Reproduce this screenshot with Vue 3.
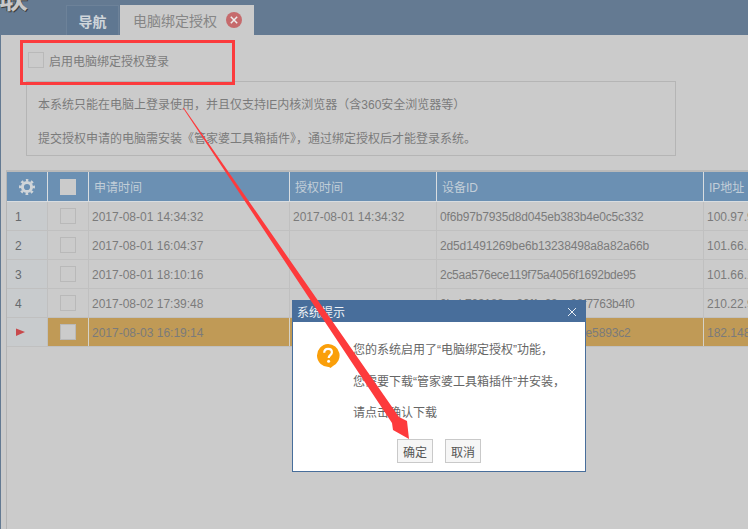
<script setup>
const rows = [
  { no: '1', applied: '2017-08-01 14:34:32', granted: '2017-08-01 14:34:32', id: '0f6b97b7935d8d045eb383b4e0c5c332', ip: '100.97.94.12', track: -0.17 },
  { no: '2', applied: '2017-08-01 16:04:37', granted: '', id: '2d5d1491269be6b13238498a8a82a66b', ip: '101.66.172.8', track: -0.14 },
  { no: '3', applied: '2017-08-01 18:10:16', granted: '', id: '2c5aa576ece119f75a4056f1692bde95', ip: '101.66.172.8', track: -0.28 },
  { no: '4', applied: '2017-08-02 17:39:48', granted: '', id: '0bcb703189aa99f1c09aa98f7763b4f0', ip: '210.22.91.30', track: -0.24 },
  { no: '5', applied: '2017-08-03 16:19:14', granted: '', id: '7a41c0d2e96b3f185bc07d6e5893c2', ip: '182.148.33.6', track: -0.14, active: true }
]
</script>

<template>
  <div class="page">
    <header class="topbar">
      <div class="brand">联</div>
      <nav class="tabs">
        <div class="tab tab-nav">导航</div>
        <div class="tab tab-current">
          <span>电脑绑定授权</span>
          <svg class="tab-close" width="16" height="16" viewBox="0 0 16 16">
            <circle cx="8" cy="8" r="8" fill="#c66a6c" />
            <path d="M4.8 4.8l6.4 6.4M11.2 4.8l-6.4 6.4" stroke="#eee" stroke-width="1.5" fill="none" />
          </svg>
        </div>
      </nav>
    </header>

    <main class="content">
      <label class="toggle">
        <span class="check"></span>
        <span>启用电脑绑定授权登录</span>
      </label>

      <section class="info">
        <p>本系统只能在电脑上登录使用&#xFF0C;并且仅支持IE内核浏览器&#xFF08;含360安全浏览器等&#xFF09;</p>
        <p>提交授权申请的电脑需安装《管家婆工具箱插件》&#xFF0C;通过绑定授权后才能登录系统。</p>
      </section>

      <section class="table">
        <div class="row head">
          <div class="cell center">
            <svg width="16" height="16" viewBox="0 0 16 16">
              <g fill="none" stroke="#d0d5d9" transform="rotate(-90 8 8)">
                <circle cx="8" cy="8" r="4.600" stroke-width="3" />
                <circle cx="8" cy="8" r="6.800" stroke-width="2.400" stroke-dasharray="2.670 2.670" stroke-dashoffset="1.335" />
              </g>
            </svg>
          </div>
          <div class="cell center"><span class="check head-check"></span></div>
          <div class="cell text">申请时间</div>
          <div class="cell text">授权时间</div>
          <div class="cell text">设备ID</div>
          <div class="cell text">IP地址</div>
        </div>
        <div v-for="r in rows" :key="r.no" class="row body" :class="{ active: r.active }">
          <div class="cell num">
            <svg v-if="r.active" width="9" height="9" viewBox="0 0 9 9"><path d="M0 .5L9 4 0 8z" fill="#c8494b" /></svg>
            <template v-else>{{ r.no }}</template>
          </div>
          <div class="cell center fill"><span class="check"></span></div>
          <div class="cell fill data">{{ r.applied }}</div>
          <div class="cell fill data">{{ r.granted }}</div>
          <div class="cell fill data" :style="{ letterSpacing: r.track + 'px' }">{{ r.id }}</div>
          <div class="cell fill data">{{ r.ip }}</div>
        </div>
      </section>
    </main>

    <div class="highlight-box"></div>

    <aside class="dialog">
      <div class="dialog-title">
        <span>系统提示</span>
        <svg width="10" height="10" viewBox="0 0 10 10"><path d="M1 1l8 8M9 1l-8 8" stroke="#e8eef4" stroke-width="1" fill="none" /></svg>
      </div>
      <div class="dialog-body">
        <svg class="ask" width="24" height="25" viewBox="0 0 24 25">
          <path d="M12 0a11.500 11.500 0 0 1 5 21.900L14.500 24 13 23a11.500 11.500 0 0 1-1-23z" fill="#fa9f0a" />
          <path d="M8.200 8.800C8.300 6.400 9.800 4.900 12.100 4.900c2.300 0 3.800 1.400 3.800 3.300 0 2.900-3.200 2.900-3.200 5.800" fill="none" stroke="#fff" stroke-width="2.200" />
          <circle cx="12.600" cy="17.200" r="1.500" fill="#fff" />
        </svg>
        <div class="dialog-lines">
          <p>您的系统启用了“电脑绑定授权”功能&#xFF0C;</p>
          <p>您需要下载“管家婆工具箱插件”并安装&#xFF0C;</p>
          <p>请点击确认下载</p>
        </div>
      </div>
      <div class="dialog-actions">
        <button class="btn ok">确定</button>
        <button class="btn">取消</button>
      </div>
    </aside>

    <svg class="arrow" width="748" height="529" viewBox="0 0 748 529">
      <path d="M183 108L184 108L399 417L407 421L409 439L393 430L392 423z" fill="#fd3a3c" />
    </svg>
  </div>
</template>

<style scoped>
.page {
  position: relative;
  width: 748px;
  height: 529px;
  overflow: hidden;
  background: #647a92;
  font-family: "Liberation Sans", "Noto Sans CJK SC", sans-serif;
  font-size: 12px;
  color: #7b7b7b;
}
.topbar {
  position: relative;
  height: 35px;
  background: #647a92;
  overflow: hidden;
}
.brand {
  position: absolute;
  left: -1px;
  top: -15px;
  font-size: 29px;
  font-weight: 700;
  line-height: 29px;
  color: #c8c8c8;
  text-shadow: 1px 1px 0 #3d3d3d, -1px 0 0 #4a4a4a;
}
.tabs {
  display: flex;
  padding: 5px 0 0 66px;
  gap: 1px;
  height: 30px;
  box-sizing: content-box;
}
.tab {
  display: flex;
  align-items: center;
  height: 30px;
  box-sizing: border-box;
  font-size: 14px;
}
.tab-nav {
  width: 53px;
  justify-content: center;
  background: #5f7791;
  border: 1px solid #6d8299;
  border-bottom: 0;
  color: #cfd5da;
  font-weight: 700;
}
.tab-current {
  width: 134px;
  padding-left: 13px;
  background: #cbcbcb;
  color: #868686;
}
.tab-close {
  margin-left: 9px;
}
.content {
  height: 494px;
  margin-left: 1px;
  padding-top: 17px;
  box-sizing: border-box;
  background: #cbcbcb;
}
.toggle {
  display: flex;
  align-items: center;
  gap: 5px;
  margin-left: 27px;
  height: 16px;
}
.check {
  display: block;
  width: 16px;
  height: 16px;
  box-sizing: border-box;
  border: 1px solid #b9b9b9;
  background: #cbcbcb;
}
.info {
  width: 650px;
  height: 75px;
  box-sizing: border-box;
  margin: 13px 0 0 25px;
  padding: 0 11px;
  border: 1px solid #b5b5b5;
}
.info p {
  margin: 0;
  height: 34px;
  line-height: 34px;
}
.info p:first-child {
  padding-top: 6px;
}
.table {
  margin: 14px 0 0 5px;
  height: 359px;
  border-top: 2px solid #b9b9b9;
  border-left: 1px solid #b5b5b5;
}
.row {
  display: grid;
  grid-template-columns: 41px 41px 201px 147px 267px 60px;
}
.cell {
  display: flex;
  align-items: center;
  box-sizing: border-box;
  padding-left: 3px;
  white-space: nowrap;
  overflow: hidden;
  border-right: 1px solid #c0c0c0;
}
.center {
  justify-content: center;
  padding-left: 0;
}
.head {
  height: 29px;
  background: #6b90b3;
  border-bottom: 1px solid #d9dde0;
}
.head .cell {
  border-right-color: #d9dde0;
  color: #c2ced8;
  font-weight: 400;
}
.head .text {
  padding-left: 5px;
}
.head-check {
  border: 0;
}
.body {
  height: 29px;
  box-sizing: border-box;
  border-bottom: 1px solid #c0c0c0;
}
.data {
  padding-top: 1px;
}
.num {
  padding: 1px 0 0 8px;
  background: #c8cbcd;
  color: #666a6d;
}
.active .fill {
  background: #c09a56;
  border-right-color: #d5d2c8;
}
.active .num {
  padding-left: 9px;
}
.active .check {
  background: #cbcbcb;
}
.highlight-box {
  position: absolute;
  left: 20px;
  top: 40px;
  width: 215px;
  height: 45px;
  box-sizing: border-box;
  border: 3px solid #fb3b3d;
}
.dialog {
  position: absolute;
  left: 292px;
  top: 300px;
  width: 294px;
  height: 172px;
  box-sizing: border-box;
  display: flex;
  flex-direction: column;
  border: 1px solid #486e9b;
  background: #fff;
  color: #666;
}
.dialog-title {
  display: flex;
  align-items: center;
  justify-content: space-between;
  height: 21px;
  flex: none;
  padding: 0 8px 0 4px;
  background: #486e9b;
  color: #eef2f6;
}
.dialog-body {
  display: flex;
  padding: 22px 0 0 23px;
  height: 117px;
  box-sizing: border-box;
}
.ask {
  flex: none;
  margin-right: 13px;
}
.dialog-lines {
  margin-top: -2px;
}
.dialog-lines p {
  margin: 0;
  height: 31.500px;
  line-height: 16px;
}
.dialog-actions {
  display: flex;
  gap: 12px;
  padding-left: 104px;
}
.btn {
  width: 36px;
  height: 24px;
  padding: 0;
  box-sizing: border-box;
  border: 1px solid #c9c9c9;
  background: #f6f6f6;
  color: #555;
  font: inherit;
}
.arrow {
  position: absolute;
  left: 0;
  top: 0;
  pointer-events: none;
}
</style>
